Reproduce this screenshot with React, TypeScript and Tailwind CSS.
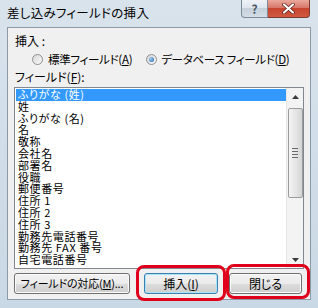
import React from 'react';

const fields = [
  'ふりがな (姓)',
  '姓',
  'ふりがな (名)',
  '名',
  '敬称',
  '会社名',
  '部署名',
  '役職',
  '郵便番号',
  '住所 1',
  '住所 2',
  '住所 3',
  '勤務先電話番号',
  '勤務先 FAX 番号',
  '自宅電話番号',
];

const Radio: React.FC<{ checked?: boolean }> = ({ checked }) => (
  <span className="w-[11px] h-[11px] rounded-full border border-[#8f8f8f] bg-[linear-gradient(135deg,#d8d8d8,#f8f8f8)] flex items-center justify-center shrink-0">
    {checked && (
      <span className="w-[5px] h-[5px] rounded-full bg-[radial-gradient(circle_at_35%_35%,#9fd0f5,#1c5fa8)]" />
    )}
  </span>
);

const Button: React.FC<{ label: React.ReactNode; width: string; primary?: boolean }> = ({ label, width, primary }) => (
  <div
    className={`${width} h-[21px] rounded-[3px] border ${
      primary ? 'border-[#3c7fb1] shadow-[inset_0_0_0_1px_#a8e4f8]' : 'border-[#707070] shadow-[inset_0_0_0_1px_#fbfbfb]'
    } bg-[linear-gradient(#f2f2f2_0%,#ebebeb_50%,#dddddd_50%,#cfcfcf_100%)] flex items-center justify-center text-[12px] leading-none text-black whitespace-nowrap`}
  >
    {label}
  </div>
);

const App: React.FC = () => {
  return (
    <div className="w-[318px] h-[308px] relative flex flex-col bg-[linear-gradient(#d9e3ec,#c9d8e5)] font-['Noto_Sans_CJK_JP',sans-serif] [font-feature-settings:'palt'] text-black overflow-hidden">
      {/* title bar */}
      <div className="h-[27px] flex items-start justify-between shrink-0">
        <span className="pl-[7px] pt-[5px] text-[12.5px] leading-[16px] tracking-[0.3px] whitespace-nowrap">差し込みフィールドの挿入</span>
        <div className="flex mr-[8px]">
          <div className="w-[27px] h-[18px] rounded-bl-[4px] border border-[#7b8a99] border-t-0 bg-[linear-gradient(#eef2f6_0%,#dfe6ee_45%,#c5d0db_50%,#d4dde6_100%)] flex items-center justify-center text-[12px] font-bold text-[#4a5866] leading-none">
            ?
          </div>
          <div className="w-[42px] h-[18px] rounded-br-[4px] border border-[#7b3a32] border-t-0 border-l-0 bg-[linear-gradient(#e9a99c_0%,#d9786a_45%,#c7442f_50%,#d05a3f_100%)] flex items-center justify-center">
            <svg width="13" height="11" viewBox="0 0 13 11">
              <path d="M2 1.5 L11 9.5 M11 1.5 L2 9.5" stroke="#5a1a12" strokeWidth="3.6" strokeLinecap="round" />
              <path d="M2 1.5 L11 9.5 M11 1.5 L2 9.5" stroke="#ffffff" strokeWidth="2.2" strokeLinecap="round" />
            </svg>
          </div>
        </div>
      </div>

      {/* client area */}
      <div className="flex-1 mx-[7px] mb-[8px] bg-[#f0f0f0] border border-[#8c9aa8] flex flex-col pl-[6px] pr-[6px] text-[12px] leading-[14px] whitespace-nowrap">
        <div className="mt-[6px] ml-[1px]">挿入 :</div>
        <div className="flex items-center mt-[4px] ml-[18px] h-[14px] text-[11.5px] tracking-[-0.3px]">
          <Radio />
          <span className="ml-[5px]">
            標準フィールド(<span className="underline">A</span>)
          </span>
          <span className="ml-[14px]">
            <Radio checked />
          </span>
          <span className="ml-[4px]">
            データベース フィールド(<span className="underline">D</span>)
          </span>
        </div>
        <div className="mt-[4px] ml-[1px]">
          フィールド(<span className="underline">F</span>):
        </div>

        {/* list box */}
        <div className="mt-[3px] h-[182px] border border-[#828790] bg-white flex">
          <div className="flex-1 pt-[1px] pl-[1px] overflow-hidden text-[11px] tracking-[0.6px]">
            {fields.map((f, i) => (
              <div
                key={f}
                className={`h-[11.8px] leading-[11.8px] pl-[2px] whitespace-nowrap ${
                  i === 0 ? 'bg-[#3399ff] text-white' : ''
                }`}
              >
                {f}
              </div>
            ))}
          </div>
          {/* scrollbar */}
          <div className="w-[17px] bg-[#f3f3f3] border-l border-[#e6e6e6] flex flex-col items-center">
            <div className="h-[17px] w-full flex items-center justify-center">
              <svg width="7" height="4" viewBox="0 0 7 4">
                <path d="M0 4 L3.5 0 L7 4 Z" fill="#3a3a3a" />
              </svg>
            </div>
            <div className="mt-[3px] w-[15px] h-[90px] rounded-[2px] border border-[#9c9c9c] bg-[linear-gradient(90deg,#f4f4f4,#e4e4e4_55%,#d4d4d4)] flex flex-col items-center justify-center gap-[2px]">
              <span className="w-[6px] h-[1px] bg-[#6a6a6a]" />
              <span className="w-[6px] h-[1px] bg-[#6a6a6a]" />
              <span className="w-[6px] h-[1px] bg-[#6a6a6a]" />
              <span className="w-[6px] h-[1px] bg-[#6a6a6a]" />
            </div>
            <div className="flex-1" />
            <div className="h-[17px] w-full flex items-center justify-center">
              <svg width="7" height="4" viewBox="0 0 7 4">
                <path d="M0 0 L3.5 4 L7 0 Z" fill="#3a3a3a" />
              </svg>
            </div>
          </div>
        </div>

        {/* buttons */}
        <div className="flex mt-[4px]">
          <Button
            width="w-[116px]"
            label={
              <span className="text-[11px] tracking-[-0.2px]">
                フィールドの対応(<span className="underline">M</span>)...
              </span>
            }
          />
          <div className="ml-[14px]">
            <Button
              width="w-[74px]"
              primary
              label={
                <span>
                  挿入(<span className="underline">I</span>)
                </span>
              }
            />
          </div>
          <div className="ml-[11px]">
            <Button width="w-[73px]" label="閉じる" />
          </div>
        </div>
      </div>

      {/* red annotations */}
      <div className="absolute left-[136px] top-[265px] w-[90px] h-[36px] rounded-[8px] border-[3px] border-[#e0001b] pointer-events-none" />
      <div className="absolute left-[226px] top-[264px] w-[84px] h-[35px] rounded-[8px] border-[3px] border-[#e0001b] pointer-events-none" />
    </div>
  );
};

export default App;
